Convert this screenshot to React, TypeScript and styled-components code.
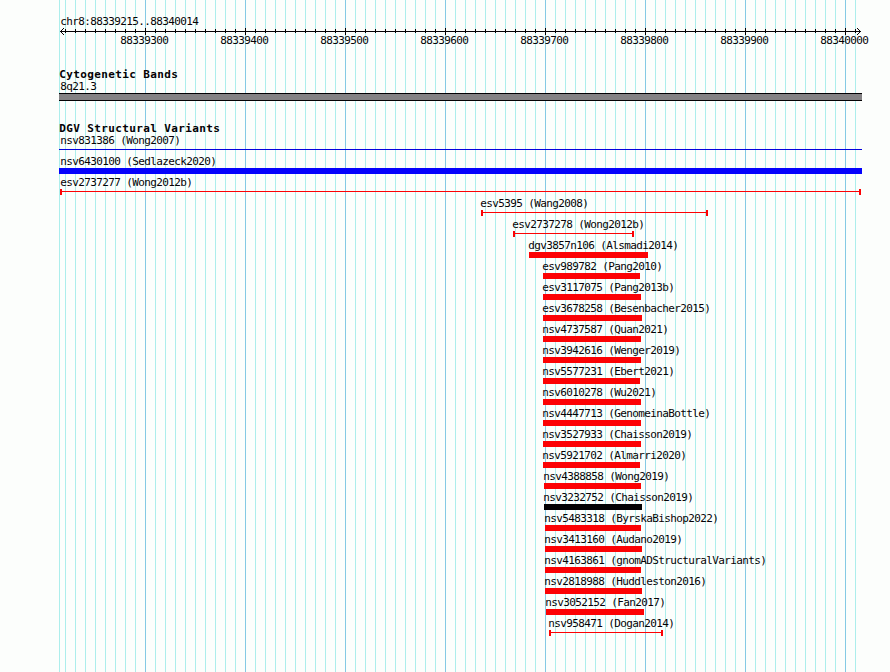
import React from 'react';
import styled, { createGlobalStyle } from 'styled-components';

const GlobalStyle = createGlobalStyle`
  body {
    margin: 0;
    background: #fcfefc;
  }
`;

// everything is measured from the left edge of the panel
const PANEL_LEFT = 59;
const PANEL_WIDTH = 803;
const FIRST_TICK = 6;
const TICK_STEP = 10;
const TICK_COUNT = 80;

const isMajor = (i: number) => i % 10 === 8;

type Kind = 'box' | 'line' | 'range';

interface Variant {
  name: string;
  start: number;
  end: number;
  kind?: Kind;
  color?: string;
  labelShift?: number;
}

const variants: Variant[] = [
  { name: 'nsv831386 (Wong2007)', start: 59, end: 862, kind: 'line', color: '#0402dc', labelShift: 1.25 },
  { name: 'nsv6430100 (Sedlazeck2020)', start: 59, end: 862, color: '#0402fc', labelShift: 1.25 },
  { name: 'esv2737277 (Wong2012b)', start: 60, end: 861, kind: 'range', labelShift: 0.25 },
  { name: 'esv5395 (Wang2008)', start: 481, end: 708, kind: 'range' },
  { name: 'esv2737278 (Wong2012b)', start: 513, end: 634, kind: 'range' },
  { name: 'dgv3857n106 (Alsmadi2014)', start: 529, end: 648 },
  { name: 'esv989782 (Pang2010)', start: 543, end: 640 },
  { name: 'esv3117075 (Pang2013b)', start: 543, end: 641 },
  { name: 'esv3678258 (Besenbacher2015)', start: 543, end: 642 },
  { name: 'nsv4737587 (Quan2021)', start: 543, end: 641 },
  { name: 'nsv3942616 (Wenger2019)', start: 543, end: 641 },
  { name: 'nsv5577231 (Ebert2021)', start: 543, end: 640 },
  { name: 'nsv6010278 (Wu2021)', start: 543, end: 641 },
  { name: 'nsv4447713 (GenomeinaBottle)', start: 543, end: 641 },
  { name: 'nsv3527933 (Chaisson2019)', start: 543, end: 641 },
  { name: 'nsv5921702 (Almarri2020)', start: 543, end: 640 },
  { name: 'nsv4388858 (Wong2019)', start: 544, end: 641 },
  { name: 'nsv3232752 (Chaisson2019)', start: 544, end: 642, color: '#040204' },
  { name: 'nsv5483318 (ByrskaBishop2022)', start: 545, end: 641 },
  { name: 'nsv3413160 (Audano2019)', start: 545, end: 642 },
  { name: 'nsv4163861 (gnomADStructuralVariants)', start: 545, end: 641 },
  { name: 'nsv2818988 (Huddleston2016)', start: 545, end: 642 },
  { name: 'nsv3052152 (Fan2017)', start: 546, end: 644 },
  { name: 'nsv958471 (Dogan2014)', start: 549, end: 663, kind: 'range' },
];

const Page = styled.main`
  display: grid;
  width: 890px;
  height: 672px;
  overflow: hidden;
  box-sizing: border-box;
  padding-left: ${PANEL_LEFT}px;
  color: #040204;
  font: 11px/12px 'DejaVu Sans Mono', monospace;
  letter-spacing: -0.622px;
  white-space: pre;
`;

const Grid = styled.svg`
  grid-area: 1 / 1;
  display: block;
  shape-rendering: crispEdges;
`;

const Tracks = styled.div`
  grid-area: 1 / 1;
  width: ${PANEL_WIDTH}px;
  padding-top: 16px;
`;

const Label = styled.div<{ $indent?: number }>`
  height: 12px;
  margin-left: ${(p) => p.$indent ?? 1.25}px;
`;

const Title = styled.h2`
  height: 12px;
  margin: 0 0 0 0.25px;
  font: bold 11px/12px 'DejaVu Sans Mono', monospace;
  letter-spacing: 0.378px;
`;

const Axis = styled.svg`
  display: block;
  height: 7px;
  shape-rendering: crispEdges;
  overflow: visible;
`;

const AxisLabels = styled.div`
  display: flex;
  gap: 52px;
  height: 12px;
  margin-left: 61.25px;
`;

const AxisLabel = styled.span`
  flex: none;
  width: 48px;
`;

const Track = styled.section`
  margin-top: 22px;
`;

const Band = styled.div`
  height: 6px;
  border: solid #040204;
  border-width: 1px 0;
  background: #848284;
`;

const Row = styled.div`
  height: 21px;
`;

const Box = styled.div<{ $left: number; $width: number; $color: string }>`
  width: ${(p) => p.$width}px;
  height: 6px;
  margin-left: ${(p) => p.$left}px;
  background: ${(p) => p.$color};
`;

const Line = styled(Box)`
  height: 1px;
  margin-top: 2px;
`;

const Range = styled.div<{ $left: number; $width: number; $color: string }>`
  box-sizing: border-box;
  width: ${(p) => p.$width}px;
  height: 6px;
  margin-left: ${(p) => p.$left}px;
  border: solid ${(p) => p.$color};
  border-width: 0 2px;
  background: linear-gradient(${(p) => p.$color}, ${(p) => p.$color}) 0 2px / 100% 1px no-repeat;
`;

const glyphs = { box: Box, line: Line, range: Range };

const Feature = ({ name, start, end, kind = 'box', color = '#fc0204', labelShift = -0.75 }: Variant) => {
  const Glyph = glyphs[kind];
  const left = start - PANEL_LEFT;
  return (
    <Row>
      <Label $indent={left + labelShift}>{name}</Label>
      <Glyph $left={left} $width={end - start} $color={color} />
    </Row>
  );
};

const ticks = Array.from({ length: TICK_COUNT }, (_, i) => ({
  x: FIRST_TICK + i * TICK_STEP,
  major: isMajor(i),
}));

const positions = [88339300, 88339400, 88339500, 88339600, 88339700, 88339800, 88339900, 88340000];

export default () => (
  <>
    <GlobalStyle />
    <Page>
      <Grid width={PANEL_WIDTH} height={672}>
        <rect x={0} width={1} height={672} fill="#aceeec" />
        {ticks.map(({ x, major }) => (
          <rect key={x} x={x} width={1} height={672} fill={major ? '#84cae4' : '#aceeec'} />
        ))}
      </Grid>
      <Tracks>
        <Label>chr8:88339215..88340014</Label>
        <Axis width={PANEL_WIDTH} height={7} fill="#040204">
          <rect x={1} y={3} width={801} height={1} />
          {ticks.map(({ x, major }) => (
            <rect key={x} x={x} y={major ? 0 : 1} width={1} height={major ? 7 : 4} />
          ))}
          <path d="M2 2h1v3h-1z M3 1h1v1h-1z M3 5h1v1h-1z M4 0h1v1h-1z M4 6h1v1h-1z" />
          <path d="M800 2h1v3h-1z M799 1h1v1h-1z M799 5h1v1h-1z M798 0h1v1h-1z M798 6h1v1h-1z" />
        </Axis>
        <AxisLabels>
          {positions.map((p) => (
            <AxisLabel key={p}>{p}</AxisLabel>
          ))}
        </AxisLabels>
        <Track>
          <Title>Cytogenetic Bands</Title>
          <Label>8q21.3</Label>
          <Band />
        </Track>
        <Track>
          <Title>DGV Structural Variants</Title>
          {variants.map((v) => (
            <Feature key={v.name} {...v} />
          ))}
        </Track>
      </Tracks>
    </Page>
  </>
);
